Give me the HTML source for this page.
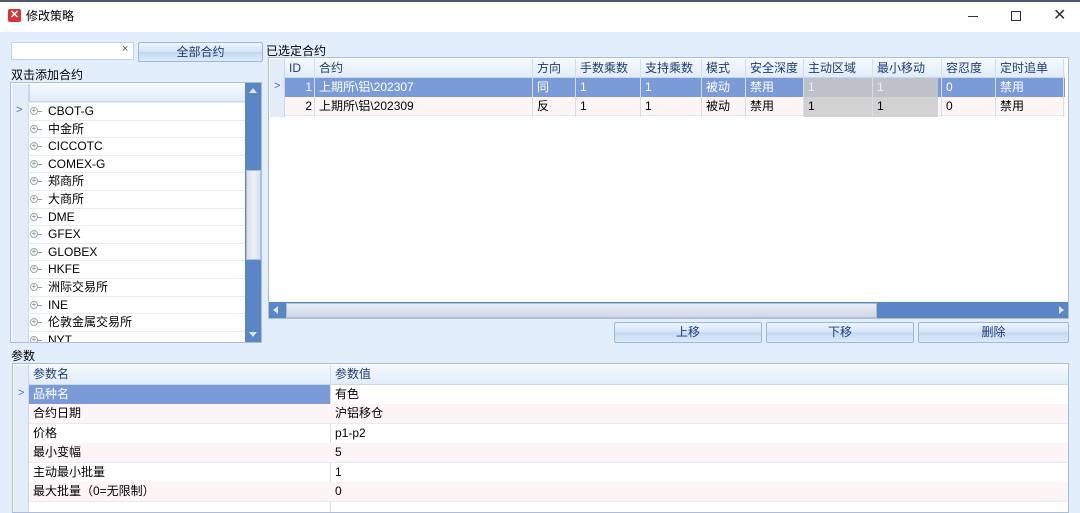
<!DOCTYPE html>
<html><head><meta charset="utf-8"><style>
*{box-sizing:border-box;margin:0;padding:0}
body{width:1080px;height:506px;background:#e3eefc;font-family:"Liberation Sans","Noto Sans CJK SC",sans-serif;font-size:12px;color:#000;position:relative;overflow:hidden}
.a{position:absolute}
.btn{position:absolute;height:21px;border:1px solid #9fb6d4;border-radius:2px;background:linear-gradient(#eef5fd,#d3e4f7 50%,#c2d8f2 51%,#dcebfb);color:#1e3d73;text-align:center;line-height:19px;font-size:12px}
.cell{position:absolute;white-space:nowrap;overflow:hidden;line-height:19px;padding-left:4px}
.hdr{color:#1e3d73}
</style></head><body>
<!-- title bar -->
<div class="a" style="left:0;top:0;width:1080px;height:2px;background:#4a5a74"></div>
<div class="a" style="left:0;top:2px;width:1080px;height:30px;background:#fff"></div>
<div class="a" style="left:8px;top:9px;width:13px;height:13px;background:#d9333a;border-radius:2px;color:#fff;font-size:11px;line-height:13px;text-align:center;font-weight:bold">✕</div>
<div class="a" style="left:26px;top:7px;font-size:12px">修改策略</div>
<div class="a" style="left:968px;top:16px;width:10px;height:1px;background:#333"></div>
<div class="a" style="left:1011px;top:11px;width:10px;height:10px;border:1px solid #333"></div>
<div class="a" style="left:1053px;top:5px;font-size:16px;color:#333">✕</div>

<!-- search -->
<div class="a" style="left:11px;top:42px;width:123px;height:18px;background:#fff;border:1px solid #c4d3e6"></div>
<div class="a" style="left:122px;top:43px;font-size:11px;color:#555">×</div>
<div class="btn" style="left:138px;top:42px;width:125px;height:20px;line-height:18px">全部合约</div>
<div class="a" style="left:11px;top:66px">双击添加合约</div>
<div class="a" style="left:266px;top:42px">已选定合约</div>

<!-- left tree -->
<div class="a" style="left:10px;top:82px;width:252px;height:261px;background:#fff;border:1px solid #a9bfd9;overflow:hidden">
 <div class="a" style="left:1px;top:1px;width:234px;height:18px;background:linear-gradient(#f5f9fe,#e1ecf9);border-bottom:1px solid #c8d7ea"></div>
 <div class="a" style="left:1px;top:1px;width:17px;height:260px;background:#e3ecf8;border-right:1px solid #c8d7ea"></div>
 <div class="a" style="left:18px;top:1px;width:1px;height:18px;background:#c8d7ea"></div>
 <div class="a" style="left:234px;top:0;width:16px;height:260px;background:#5b86c6"></div>
 <div class="a" style="left:235px;top:87px;width:15px;height:90px;background:linear-gradient(90deg,#d6dfeb,#eef2f7,#d6dfeb);border:1px solid #b0bfd4"></div>
 <div class="a" style="left:238px;top:5px;width:0;height:0;border-left:4px solid transparent;border-right:4px solid transparent;border-bottom:5px solid #dbe6f5"></div>
 <div class="a" style="left:238px;top:249px;width:0;height:0;border-left:4px solid transparent;border-right:4px solid transparent;border-top:5px solid #dbe6f5"></div>
 <div id="tree"></div>
</div>

<!-- right grid -->
<div class="a" style="left:268px;top:57px;width:801px;height:262px;background:#fff;border:1px solid #a9bfd9;overflow:hidden">
 <div class="a" style="left:1px;top:1px;width:795px;height:19px;background:linear-gradient(#f5f9fe,#e1ecf9);border-bottom:1px solid #c8d7ea"></div>
 <div class="a" style="left:1px;top:1px;width:15px;height:58px;background:#e3ecf8;border-right:1px solid #c8d7ea"></div>
 <div class="a" style="left:16px;top:20px;width:780px;height:19px;background:#7b9bd8"></div>
 <div class="a" style="left:534px;top:20px;width:135px;height:39px;background:rgba(200,200,200,.85)"></div>
 <div class="a" style="left:16px;top:39px;width:780px;height:19px;background:#fdf4f6;border-bottom:1px solid #e0e6f0"></div>
 <div class="a" style="left:534px;top:39px;width:135px;height:19px;background:#d2d2d2"></div>
 <div class="a" style="left:5px;top:22px;color:#4a6fb0;font-size:11px">&gt;</div>
 <div id="rg"></div>
 <div class="a" style="left:0;top:244px;width:800px;height:17px;background:#5b86c6"></div>
 <div class="a" style="left:17px;top:245px;width:591px;height:15px;background:linear-gradient(#e8edf3,#cfd8e3);border:1px solid #b0bfd4"></div>
 <div class="a" style="left:4px;top:248px;border-top:4px solid transparent;border-bottom:4px solid transparent;border-right:5px solid #dbe6f5"></div>
 <div class="a" style="left:790px;top:248px;border-top:4px solid transparent;border-bottom:4px solid transparent;border-left:5px solid #dbe6f5"></div>
</div>

<div class="btn" style="left:614px;top:322px;width:148px">上移</div>
<div class="btn" style="left:766px;top:322px;width:148px">下移</div>
<div class="btn" style="left:918px;top:322px;width:151px">删除</div>

<div class="a" style="left:11px;top:347px">参数</div>
<!-- bottom grid -->
<div class="a" style="left:12px;top:363px;width:1057px;height:150px;background:#fff;border:1px solid #a9bfd9;overflow:hidden">
 <div class="a" style="left:1px;top:1px;width:1055px;height:20px;background:linear-gradient(#f5f9fe,#e1ecf9);border-bottom:1px solid #c8d7ea"></div>
 <div class="a" style="left:1px;top:1px;width:15px;height:150px;background:#e3ecf8;border-right:1px solid #c8d7ea"></div>
 <div class="a" style="left:317px;top:1px;width:1px;height:150px;background:#d4dde9"></div>
 <div class="a" style="left:16px;top:21px;width:301px;height:19px;background:#7b9bd8"></div>
 <div class="a" style="left:5px;top:23px;color:#4a6fb0;font-size:11px">&gt;</div>
 <div id="bg"></div>
</div>
<script>
var t=["CBOT-G","中金所","CICCOTC","COMEX-G","郑商所","大商所","DME","GFEX","GLOBEX","HKFE","洲际交易所","INE","伦敦金属交易所","NYT"];
var h="";t.forEach(function(s,i){var y=19+i*17.6;
h+='<div class="a" style="left:1px;top:'+y+'px;width:233px;height:1px;background:#e4ebf4"></div>';
h+='<div class="a" style="left:19px;top:'+(y+5)+'px;width:8px;height:8px;border:1px solid #9aa;border-radius:50%;font-size:8px;line-height:6px;text-align:center;color:#778">+</div><div class="a" style="left:27px;top:'+(y+9)+'px;width:4px;height:1px;background:#999"></div>';
h+='<div class="a" style="left:37px;top:'+(y+1)+'px;line-height:17px">'+s+'</div>';});
h+='<div class="a" style="left:5px;top:21px;color:#4a6fb0;font-size:11px">&gt;</div>';
document.getElementById('tree').innerHTML=h;
var cols=[[16,30,"ID"],[46,218,"合约"],[264,43,"方向"],[307,65,"手数乘数"],[372,61,"支持乘数"],[433,44,"模式"],[477,58,"安全深度"],[535,69,"主动区域"],[604,69,"最小移动"],[673,54,"容忍度"],[727,68,"定时追单"]];
var r1=["1","上期所\\铝\\202307","同","1","1","被动","禁用","1","1","0","禁用"];
var r2=["2","上期所\\铝\\202309","反","1","1","被动","禁用","1","1","0","禁用"];
h="";cols.forEach(function(c,i){
h+='<div class="a" style="left:'+(c[0]+c[1]-1)+'px;top:1px;width:1px;height:58px;background:#d4dde9"></div>';
h+='<div class="cell hdr" style="left:'+c[0]+'px;top:1px;width:'+c[1]+'px">'+c[2]+'</div>';
var al=i==0?'text-align:right;padding-right:3px;':'';
var c1=(i==7||i==8)?'#eee':'#fff';
h+='<div class="cell" style="'+al+'left:'+c[0]+'px;top:20px;width:'+c[1]+'px;color:'+c1+'">'+r1[i]+'</div>';
h+='<div class="cell" style="'+al+'left:'+c[0]+'px;top:39px;width:'+c[1]+'px">'+r2[i]+'</div>';});
document.getElementById('rg').innerHTML=h;
var p=[["品种名","有色"],["合约日期","沪铝移仓"],["价格","p1-p2"],["最小变幅","5"],["主动最小批量","1"],["最大批量（0=无限制）","0"]];
h='<div class="cell hdr" style="left:16px;top:1px">参数名</div><div class="cell hdr" style="left:318px;top:1px">参数值</div>';
p.forEach(function(r,i){var y=21+i*19.4;
h+='<div class="a" style="left:16px;top:'+(y+19)+'px;width:1040px;height:1px;background:#e4ebf4"></div>';
if(i%2==1)h+='<div class="a" style="left:16px;top:'+y+'px;width:1040px;height:19px;background:#fdf4f6"></div>';
h+='<div class="cell" style="left:16px;top:'+y+'px;color:'+(i==0?'#fff':'#000')+'">'+r[0]+'</div><div class="cell" style="left:318px;top:'+y+'px">'+r[1]+'</div>';});
document.getElementById('bg').innerHTML=h;
</script>
</body></html>
